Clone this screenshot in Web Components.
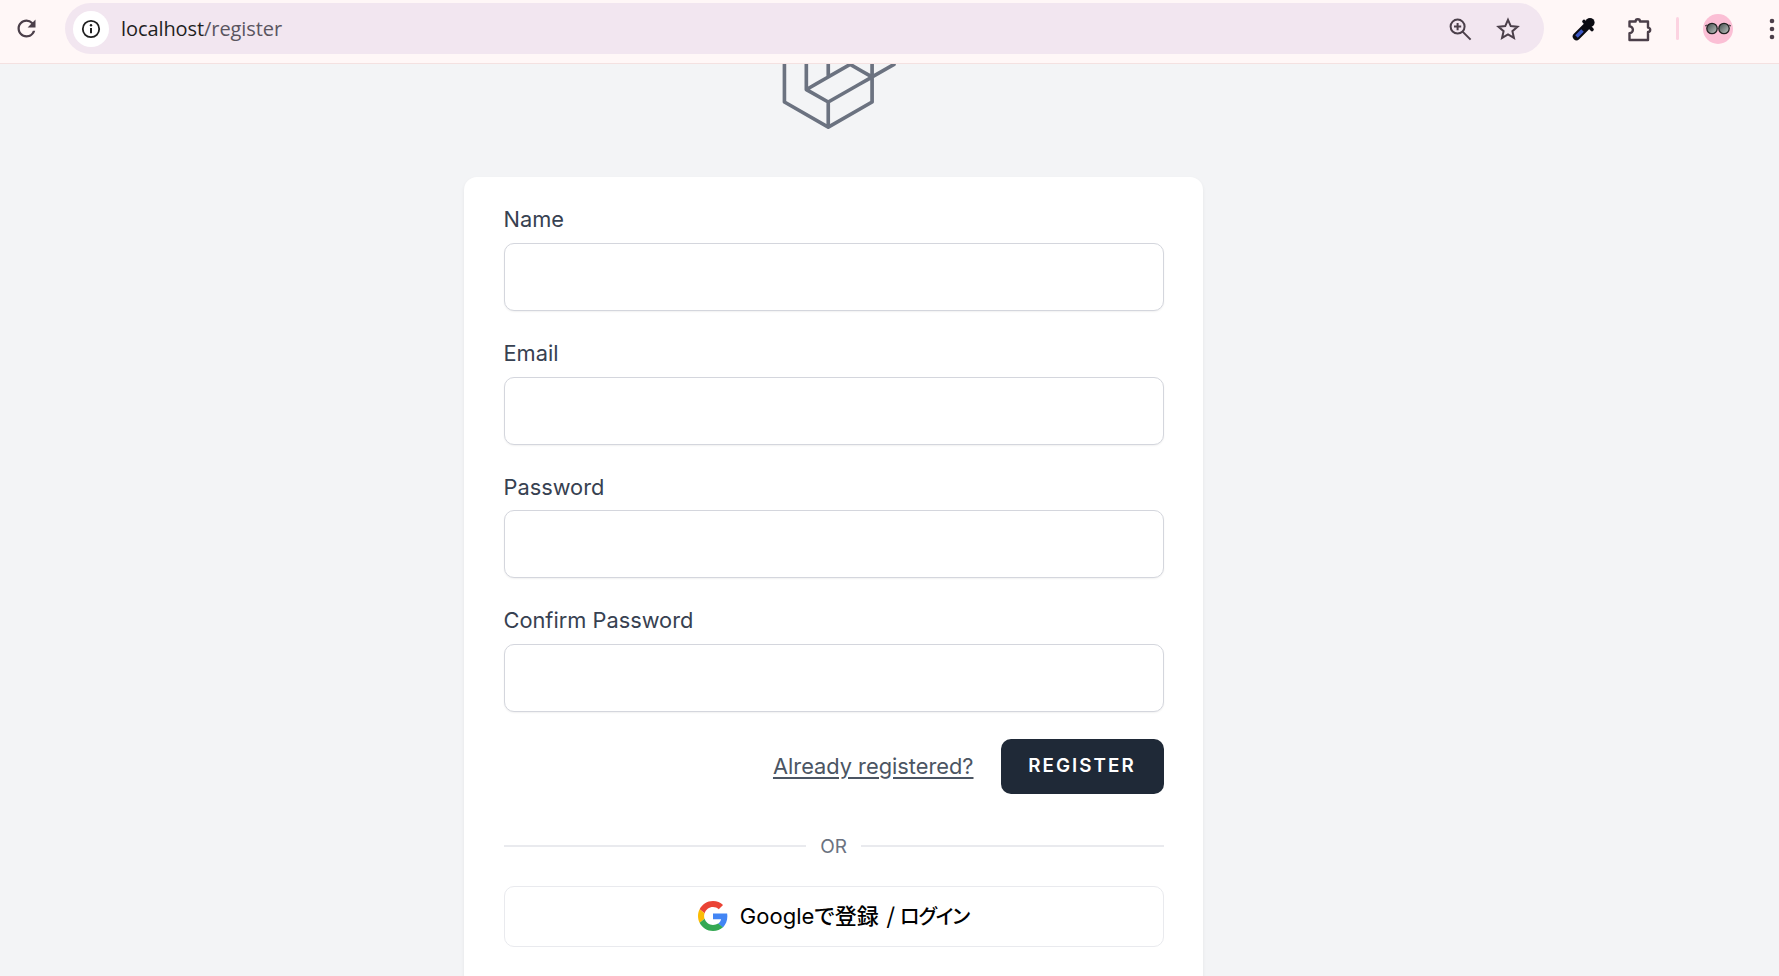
<!DOCTYPE html>
<html lang="en">
<head>
<meta charset="utf-8">
<title>Register</title>
<style>
html,body{ margin:0; height:100%; }
body{
  display:flex;
  flex-direction:column;
  height:976px;
  overflow:hidden;
  background:#f3f4f6;
  font-family:"Inter","Liberation Sans",sans-serif;
}
</style>
</head>
<body>
<browser-bar url-host="localhost" url-path="/register"></browser-bar>
<register-page>
  <app-logo slot="logo"></app-logo>
  <register-card>
    <form-field label="Name" type="text"></form-field>
    <form-field label="Email" type="email"></form-field>
    <form-field label="Password" type="password"></form-field>
    <form-field label="Confirm Password" type="password"></form-field>
    <form-actions link="Already registered?" button="REGISTER"></form-actions>
    <or-divider>OR</or-divider>
    <google-button latin="Google" kanji="で登録" kana="ログイン"></google-button>
  </register-card>
</register-page>

<script>
window.customElements.define('browser-bar', class extends HTMLElement {
  constructor(){ super(); this.attachShadow({mode:'open'}); }
  connectedCallback(){
    this.shadowRoot.innerHTML = `
    <style>
:host{
  display:flex;
  flex:none;
  align-items:center;
  box-sizing:border-box;
  height:64px;
  padding:0 0 6px 12.5px;
  background:#fff7f7;
  border-bottom:1px solid #f4e1e1;
  color:#4b3f4a;
}
svg{ display:block; flex:none; }
.reload{ margin-right:25.5px; }
.pill{
  display:flex;
  align-items:center;
  flex:none;
  width:1479px;
  height:51px;
  box-sizing:border-box;
  padding:0 24px 0 7.5px;
  border-radius:26px;
  background:#f2e6f0;
}
.chip{
  display:flex;
  align-items:center;
  justify-content:center;
  width:36px;
  height:36px;
  border-radius:50%;
  background:#fff;
  color:#1f1f1f;
  margin-right:12.5px;
}
.url{
  flex:1;
  font:20px/1 "Open Sans","Liberation Sans",sans-serif;
  letter-spacing:-.08px;
  color:#5a5560;
}
.url b{ font-weight:400; color:#1f1f1f; }
.zoom{ margin-right:24.5px; }
.tools{
  display:flex;
  align-items:center;
}
.dropper{ margin-left:27px; }
.puzzle{ margin-left:30px; }
.sep{
  width:3px;
  height:23px;
  margin-left:23px;
  border-radius:2px;
  background:#fcd3e1;
}
.avatar{
  display:flex;
  align-items:center;
  justify-content:center;
  width:30px;
  height:30px;
  margin-left:24px;
  border-radius:50%;
  background:#fbbfd5;
}
.dots{ margin-left:36px; }
    </style>
    <svg class="reload" width="27" height="27" viewBox="0 0 24 24" fill="currentColor"><path d="M17.65 6.35A7.958 7.958 0 0 0 12 4c-4.42 0-7.99 3.58-7.99 8s3.57 8 7.99 8c3.73 0 6.84-2.55 7.73-6h-2.08A5.99 5.99 0 0 1 12 18c-3.31 0-6-2.69-6-6s2.69-6 6-6c1.66 0 3.14.69 4.22 1.78L13 11h7V4l-2.35 2.35z"/></svg>
    <div class="pill">
      <div class="chip">
        <svg width="20" height="20" viewBox="0 0 20 20" fill="none" stroke="currentColor"><circle cx="10" cy="10" r="8.2" stroke-width="1.8"/><path d="M10 9v5.2" stroke-width="2"/><circle cx="10" cy="6.2" r="1.2" fill="currentColor" stroke="none"/></svg>
      </div>
      <span class="url"><b>${this.getAttribute('url-host')}</b>${this.getAttribute('url-path')}</span>
      <svg class="zoom" width="24" height="24" viewBox="0 0 24 24" fill="none" stroke="currentColor" stroke-width="2"><circle cx="9.6" cy="9.6" r="7"/><path d="M14.6 14.6l8 8"/><path d="M9.6 6v7.2M6 9.6h7.2"/></svg>
      <svg class="star" width="24" height="24" viewBox="0 0 24 24" fill="none" stroke="currentColor" stroke-width="2" stroke-linejoin="miter"><path d="M12 2.8l2.75 6.3 6.75.6-5.1 4.5 1.55 6.7L12 17.4l-5.95 3.5 1.55-6.7-5.1-4.5 6.75-.6z"/></svg>
    </div>
    <div class="tools">
      <svg class="dropper" width="26" height="26" viewBox="0 0 26 26" fill="none"><path d="M15 11L5.5 20.5" stroke="#0b0b12" stroke-width="7.5" stroke-linecap="round"/><path d="M11.5 14.5L5.5 20.5" stroke="#3b56c4" stroke-width="3.6"/><path d="M13 5.5l8 8" stroke="#0b0b12" stroke-width="3.6" stroke-linecap="round"/><circle cx="19" cy="6.5" r="4.6" fill="#0b0b12"/></svg>
      <svg class="puzzle" width="26" height="28" viewBox="0 0 26 28" fill="none" stroke="currentColor" stroke-width="2.4" stroke-linejoin="round"><path d="M2.5 6.5H8.6a2.2 2.2 0 0 1 4.4 0H21V12.6a2.2 2.2 0 0 1 0 4.4V25H2.5V18.2a3.4 3.4 0 0 0 0-6.8Z"/></svg>
      <div class="sep"></div>
      <div class="avatar">
        <svg width="26" height="13" viewBox="0 0 26 13"><path d="M0 4l2-1M26 4l-2-1" stroke="#333" stroke-width="1"/><defs><linearGradient id="lens" x1="0" y1="0" x2="1" y2="1"><stop offset="0" stop-color="#3f4a48"/><stop offset="1" stop-color="#c4c8c6"/></linearGradient></defs><circle cx="7" cy="6.5" r="5.2" fill="url(#lens)" stroke="#222" stroke-width="1.3"/><circle cx="19" cy="6.5" r="5.2" fill="url(#lens)" stroke="#222" stroke-width="1.3"/></svg>
      </div>
      <svg class="dots" width="6" height="24" viewBox="0 0 6 24" fill="currentColor"><circle cx="3" cy="4" r="2.3"/><circle cx="3" cy="12" r="2.3"/><circle cx="3" cy="20" r="2.3"/></svg>
    </div>`;
  }
});

window.customElements.define('register-page', class extends HTMLElement {
  constructor(){ super(); this.attachShadow({mode:'open'}); }
  connectedCallback(){
    this.shadowRoot.innerHTML = `
    <style>
:host{
  display:flex;
  flex:1;
  flex-direction:column;
  align-items:center;
  min-height:0;
  padding-right:112px;
  overflow:hidden;
  background:#f3f4f6;
}
    </style>
    <slot name="logo"></slot>
    <slot></slot>`;
  }
});

window.customElements.define('app-logo', class extends HTMLElement {
  constructor(){ super(); this.attachShadow({mode:'open'}); }
  connectedCallback(){
    this.shadowRoot.innerHTML = `
    <style>
:host{
  display:block;
  flex:none;
  width:132px;
  height:132px;
  margin-top:-59px;
  color:#6b7280;
}
svg{ display:block; width:100%; height:100%; fill:currentColor; }
    </style>
    <svg viewBox="0 0 316 316"><path d="M305.8 81.125C305.77 80.995 305.69 80.885 305.65 80.755C305.56 80.525 305.49 80.285 305.37 80.075C305.29 79.935 305.17 79.815 305.07 79.685C304.94 79.515 304.83 79.325 304.68 79.175C304.55 79.045 304.39 78.955 304.25 78.845C304.09 78.715 303.95 78.575 303.77 78.475L251.32 48.275C249.97 47.495 248.31 47.495 246.96 48.275L194.51 78.475C194.33 78.575 194.19 78.725 194.03 78.845C193.89 78.955 193.73 79.045 193.6 79.175C193.45 79.325 193.34 79.515 193.21 79.685C193.11 79.815 192.99 79.935 192.91 80.075C192.79 80.285 192.71 80.525 192.63 80.755C192.58 80.875 192.51 80.995 192.48 81.125C192.38 81.495 192.33 81.875 192.33 82.265V139.625L148.62 164.795V52.575C148.62 52.185 148.57 51.805 148.47 51.435C148.44 51.305 148.36 51.195 148.32 51.065C148.23 50.835 148.16 50.595 148.04 50.385C147.96 50.245 147.84 50.125 147.74 49.995C147.61 49.825 147.5 49.635 147.35 49.485C147.22 49.355 147.06 49.265 146.92 49.155C146.76 49.025 146.62 48.885 146.44 48.785L93.99 18.585C92.64 17.805 90.98 17.805 89.63 18.585L37.18 48.785C37 48.885 36.86 49.035 36.7 49.155C36.56 49.265 36.4 49.355 36.27 49.485C36.12 49.635 36.01 49.825 35.88 49.995C35.78 50.125 35.66 50.245 35.58 50.385C35.46 50.595 35.38 50.835 35.3 51.065C35.25 51.185 35.18 51.305 35.15 51.435C35.05 51.805 35 52.185 35 52.575V232.235C35 233.795 35.84 235.245 37.19 236.025L142.1 296.425C142.33 296.555 142.58 296.635 142.83 296.725C142.95 296.765 143.06 296.835 143.18 296.865C143.55 296.965 143.93 297.015 144.31 297.015C144.69 297.015 145.07 296.965 145.44 296.865C145.56 296.835 145.67 296.765 145.79 296.725C146.04 296.635 146.29 296.555 146.52 296.425L251.43 236.025C252.78 235.245 253.62 233.805 253.62 232.235V174.875L303.88 145.935C305.23 145.155 306.07 143.715 306.07 142.145V82.265C305.95 81.875 305.9 81.495 305.8 81.125ZM144.2 227.205L100.57 202.515L146.39 176.135L196.66 147.195L240.33 172.335L208.29 190.625L144.2 227.205ZM244.75 114.995V164.795L226.39 154.225L201.03 139.625V89.825L219.39 100.395L244.75 114.995ZM249.12 57.105L292.81 82.265L249.12 107.425L205.43 82.265L249.12 57.105ZM114.49 184.425L96.13 194.995V85.305L121.49 70.705L139.85 60.135V169.815L114.49 184.425ZM91.76 27.425L135.45 52.585L91.76 77.745L48.07 52.585L91.76 27.425ZM43.67 60.135L62.03 70.705L87.39 85.305V202.545V202.555V202.565C87.39 202.735 87.44 202.895 87.46 203.055C87.49 203.265 87.49 203.485 87.55 203.695V203.705C87.6 203.875 87.69 204.035 87.76 204.195C87.84 204.375 87.89 204.575 87.99 204.745C87.99 204.745 87.99 204.755 88 204.755C88.09 204.905 88.22 205.035 88.33 205.175C88.45 205.335 88.55 205.495 88.69 205.635L88.7 205.645C88.82 205.765 88.98 205.855 89.12 205.965C89.28 206.085 89.42 206.225 89.59 206.325C89.6 206.325 89.6 206.325 89.61 206.335C89.62 206.335 89.62 206.345 89.63 206.345L139.87 234.775V285.065L43.67 229.705V60.135ZM244.75 229.705L148.58 285.075V234.775L219.8 194.115L244.75 179.875V229.705ZM297.2 139.625L253.61 164.795V114.995L278.97 100.395L297.33 89.825V139.625H297.2Z"/></svg>`;
  }
});

window.customElements.define('register-card', class extends HTMLElement {
  constructor(){ super(); this.attachShadow({mode:'open'}); }
  connectedCallback(){
    this.shadowRoot.innerHTML = `
    <style>
:host{
  display:block;
  flex:none;
  box-sizing:border-box;
  width:739px;
  margin-top:40px;
  padding:26.4px 39.5px 40px;
  background:#fff;
  border-radius:13px;
  box-shadow:0 2px 4px rgba(0,0,0,.06);
}
    </style>
    <slot></slot>`;
  }
});

window.customElements.define('form-field', class extends HTMLElement {
  constructor(){ super(); this.attachShadow({mode:'open'}); }
  connectedCallback(){
    this.shadowRoot.innerHTML = `
    <style>
:host{
  display:block;
  margin-bottom:25.95px;
}
label{
  display:block;
  font:400 21.8px/33px "Inter","Liberation Sans",sans-serif;
  color:#374151;
  margin-bottom:6.7px;
}
input{
  display:block;
  box-sizing:border-box;
  width:100%;
  height:68px;
  border:1.5px solid #d4d6dd;
  border-radius:10px;
  background:#fff;
  box-shadow:0 1px 2px rgba(0,0,0,.06);
  outline:none;
}
    </style>
    <label>${this.getAttribute('label')}</label>
    <input type="${this.getAttribute('type')}">`;
  }
});

window.customElements.define('form-actions', class extends HTMLElement {
  constructor(){ super(); this.attachShadow({mode:'open'}); }
  connectedCallback(){
    this.shadowRoot.innerHTML = `
    <style>
:host{
  display:flex;
  align-items:center;
  justify-content:flex-end;
  gap:27px;
  margin-top:26.7px;
}
a{
  font:21.8px/33px "Inter","Liberation Sans",sans-serif;
  color:#4b5563;
  text-decoration:underline;
  text-underline-offset:3px;
}
button{
  box-sizing:border-box;
  width:163px;
  height:55px;
  border:none;
  border-radius:10px;
  background:#1f2937;
  color:#fff;
  font:600 18.8px/1 "Inter","Liberation Sans",sans-serif;
  letter-spacing:.11em;
}
    </style>
    <a href="#">${this.getAttribute('link')}</a>
    <button type="button">${this.getAttribute('button')}</button>`;
  }
});

window.customElements.define('or-divider', class extends HTMLElement {
  constructor(){ super(); this.attachShadow({mode:'open'}); }
  connectedCallback(){
    this.shadowRoot.innerHTML = `
    <style>
:host{
  display:flex;
  align-items:center;
  gap:14px;
  margin-top:36px;
  font:19px/33px "Inter","Liberation Sans",sans-serif;
  color:#6b7280;
}
:host::before,:host::after{
  content:"";
  flex:1;
  height:1.5px;
  background:#e9eaee;
}
    </style>
    <slot></slot>`;
  }
});

window.customElements.define('google-button', class extends HTMLElement {
  constructor(){ super(); this.attachShadow({mode:'open'}); }
  connectedCallback(){
    this.shadowRoot.innerHTML = `
    <style>
:host{
  display:flex;
  align-items:center;
  justify-content:center;
  gap:12px;
  box-sizing:border-box;
  height:61px;
  margin-top:23px;
  border:1.5px solid #e9eaee;
  border-radius:10px;
  background:#fff;
  color:#000;
}
svg{ display:block; flex:none; }
.label{
  padding-bottom:2px;
  white-space:nowrap;
  font:500 22px/1 "Noto Sans CJK JP",sans-serif;
}
.latin{ font:400 22px/1 "Inter","Liberation Sans",sans-serif; }
.kanji{ margin-right:3px; font-feature-settings:"palt"; }
.kana{ font-size:20px; letter-spacing:-1px; font-feature-settings:"palt"; }
    </style>
    <svg width="30" height="30" viewBox="0 0 48 48">
      <path fill="#EA4335" d="M24 9.5c3.54 0 6.71 1.22 9.21 3.6l6.85-6.85C35.9 2.38 30.47 0 24 0 14.62 0 6.51 5.38 2.56 13.22l7.98 6.19C12.43 13.72 17.74 9.5 24 9.5z"/>
      <path fill="#4285F4" d="M46.98 24.55c0-1.57-.15-3.09-.38-4.55H24v9.02h12.94c-.58 2.96-2.26 5.48-4.78 7.18l7.73 6c4.51-4.18 7.09-10.36 7.09-17.65z"/>
      <path fill="#FBBC05" d="M10.53 28.59c-.48-1.45-.76-2.99-.76-4.59s.27-3.14.76-4.59l-7.98-6.19C.92 16.46 0 20.12 0 24c0 3.88.92 7.54 2.56 10.78l7.97-6.19z"/>
      <path fill="#34A853" d="M24 48c6.48 0 11.93-2.13 15.89-5.81l-7.73-6c-2.15 1.45-4.92 2.3-8.16 2.3-6.26 0-11.57-4.22-13.47-9.91l-7.98 6.19C6.51 42.62 14.62 48 24 48z"/>
    </svg>
    <span class="label"><span class="latin">${this.getAttribute('latin')}</span><span class="kanji">${this.getAttribute('kanji')}</span> / <span class="kana">${this.getAttribute('kana')}</span></span>`;
  }
});
</script>
</body>
</html>
